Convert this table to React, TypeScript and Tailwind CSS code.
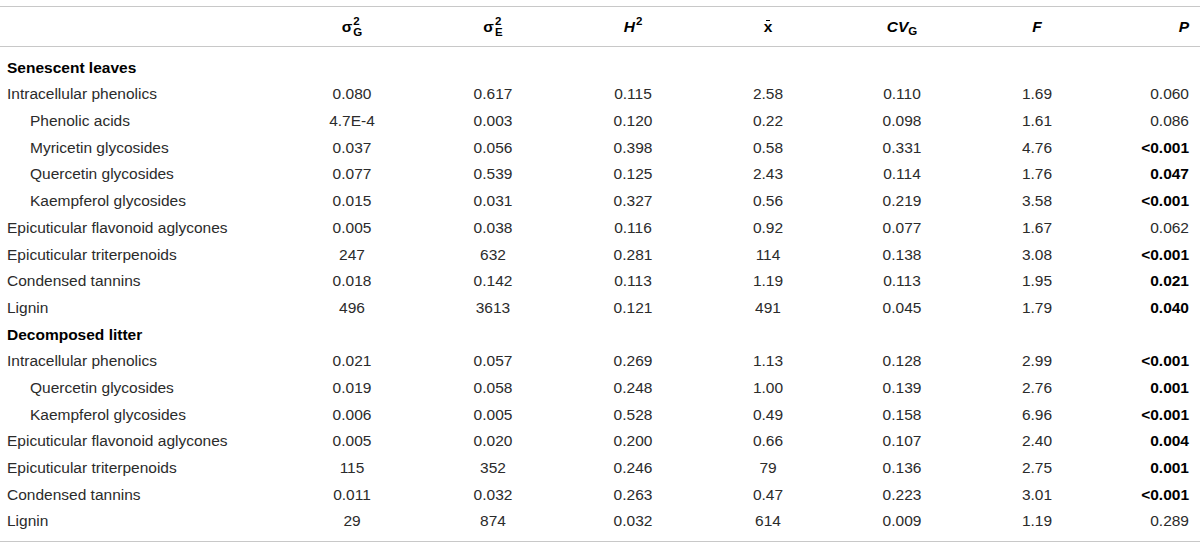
import React from "react";

type Row = {
  label: string;
  indent?: boolean;
  section?: boolean;
  v?: string[];
  pBold?: boolean;
};

const rows: Row[] = [
  { label: "Senescent leaves", section: true },
  { label: "Intracellular phenolics", v: ["0.080", "0.617", "0.115", "2.58", "0.110", "1.69", "0.060"] },
  { label: "Phenolic acids", indent: true, v: ["4.7E-4", "0.003", "0.120", "0.22", "0.098", "1.61", "0.086"] },
  { label: "Myricetin glycosides", indent: true, v: ["0.037", "0.056", "0.398", "0.58", "0.331", "4.76", "<0.001"], pBold: true },
  { label: "Quercetin glycosides", indent: true, v: ["0.077", "0.539", "0.125", "2.43", "0.114", "1.76", "0.047"], pBold: true },
  { label: "Kaempferol glycosides", indent: true, v: ["0.015", "0.031", "0.327", "0.56", "0.219", "3.58", "<0.001"], pBold: true },
  { label: "Epicuticular flavonoid aglycones", v: ["0.005", "0.038", "0.116", "0.92", "0.077", "1.67", "0.062"] },
  { label: "Epicuticular triterpenoids", v: ["247", "632", "0.281", "114", "0.138", "3.08", "<0.001"], pBold: true },
  { label: "Condensed tannins", v: ["0.018", "0.142", "0.113", "1.19", "0.113", "1.95", "0.021"], pBold: true },
  { label: "Lignin", v: ["496", "3613", "0.121", "491", "0.045", "1.79", "0.040"], pBold: true },
  { label: "Decomposed litter", section: true },
  { label: "Intracellular phenolics", v: ["0.021", "0.057", "0.269", "1.13", "0.128", "2.99", "<0.001"], pBold: true },
  { label: "Quercetin glycosides", indent: true, v: ["0.019", "0.058", "0.248", "1.00", "0.139", "2.76", "0.001"], pBold: true },
  { label: "Kaempferol glycosides", indent: true, v: ["0.006", "0.005", "0.528", "0.49", "0.158", "6.96", "<0.001"], pBold: true },
  { label: "Epicuticular flavonoid aglycones", v: ["0.005", "0.020", "0.200", "0.66", "0.107", "2.40", "0.004"], pBold: true },
  { label: "Epicuticular triterpenoids", v: ["115", "352", "0.246", "79", "0.136", "2.75", "0.001"], pBold: true },
  { label: "Condensed tannins", v: ["0.011", "0.032", "0.263", "0.47", "0.223", "3.01", "<0.001"], pBold: true },
  { label: "Lignin", v: ["29", "874", "0.032", "614", "0.009", "1.19", "0.289"] },
];

const grid =
  "grid grid-cols-[282px_140px_142px_138px_132px_136px_134px_96px] items-center";

function Sigma({ sub }: { sub: string }) {
  return (
    <span className="inline-flex items-center">
      <span className="text-[15.5px] font-bold leading-none">σ</span>
      <span className="inline-flex flex-col items-start ml-[1px] text-[11.5px] font-bold">
        <span className="leading-[11px]">2</span>
        <span className="leading-[11px]">{sub}</span>
      </span>
    </span>
  );
}

export default function App() {
  return (
    <div
      className="w-[1200px] h-[547px] bg-white text-[#2b2b2b] text-[15.5px] pt-[6px]"
      style={{ fontFamily: '"Liberation Sans", Arial, Helvetica, sans-serif' }}
    >
      <div className="border-t border-b border-[#c8c8c8]">
        <div className={`${grid} h-[39px] font-bold text-black`}>
          <div />
          <div className="text-center"><Sigma sub="G" /></div>
          <div className="text-center"><Sigma sub="E" /></div>
          <div className="text-center italic">
            H<span className="inline-block text-[11.5px] not-italic align-top relative top-[-2px] ml-[1px]">2</span>
          </div>
          <div className="text-center">
            <span className="relative inline-block">
              x
              <span className="absolute left-[2px] right-[2px] top-[5px] h-[1.5px] bg-black" />
            </span>
          </div>
          <div className="text-center italic">
            CV<span className="not-italic text-[11.5px] relative top-[3px]">G</span>
          </div>
          <div className="text-center italic">F</div>
          <div className="text-right pr-[11px] italic">P</div>
        </div>
      </div>
      <div className="border-b border-[#c8c8c8] py-[7px]">
        {rows.map((r, i) => (
          <div key={i} className={`${grid} h-[26.7px]`}>
            <div
              className={`${r.indent ? "pl-[30px]" : "pl-[7px]"} ${
                r.section ? "font-bold text-black" : ""
              } whitespace-nowrap`}
            >
              {r.label}
            </div>
            {r.v &&
              r.v.map((val, j) =>
                j < 6 ? (
                  <div key={j} className="text-center">
                    {val}
                  </div>
                ) : (
                  <div
                    key={j}
                    className={`text-right pr-[11px] ${r.pBold ? "font-bold text-black" : ""}`}
                  >
                    {val}
                  </div>
                )
              )}
          </div>
        ))}
      </div>
    </div>
  );
}
